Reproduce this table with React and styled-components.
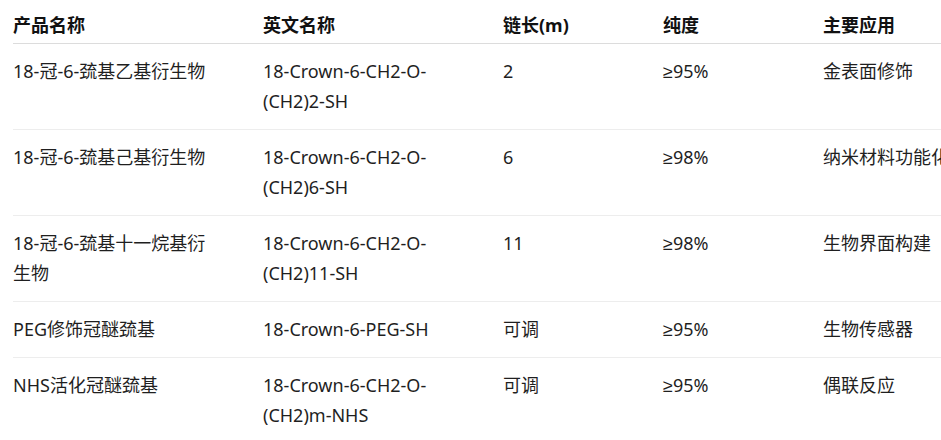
import React from 'react';
import styled, { createGlobalStyle } from 'styled-components';

const GlobalStyle = createGlobalStyle`
    body {
        margin: 0;
        background: #fff;
        overflow: hidden;
        font-family: "Noto Sans", "Liberation Sans", "Noto Sans CJK SC", sans-serif;
        color: #1f1f1f;
    }
`;

const Wrapper = styled.div`
    padding: 0 0 0 13px;
    width: 1040px;
`;

const Table = styled.table`
    border-collapse: collapse;
    table-layout: fixed;
    width: 1010px;
    font-size: 18px;
    line-height: 30px;
`;

const Col = styled.col`
    width: ${p => p.$w}px;
`;

const Th = styled.th`
    text-align: left;
    font-weight: 700;
    padding: 10px 48px 3px 0;
    border-bottom: 1px solid #dcdcdc;
    color: #111;
`;

const Td = styled.td`
    vertical-align: top;
    padding: 12px 48px 13px 0;
`;

const Row = styled.tr`
    border-bottom: 1px solid #ededed;

    &:last-child {
        border-bottom: none;
    }
`;

const products = [
    { cn: '18-冠-6-巯基乙基衍生物', en: '18-Crown-6-CH2-O-(CH2)2-SH', len: '2', pur: '≥95%', use: '金表面修饰' },
    { cn: '18-冠-6-巯基己基衍生物', en: '18-Crown-6-CH2-O-(CH2)6-SH', len: '6', pur: '≥98%', use: '纳米材料功能化' },
    { cn: '18-冠-6-巯基十一烷基衍生物', en: '18-Crown-6-CH2-O-(CH2)11-SH', len: '11', pur: '≥98%', use: '生物界面构建' },
    { cn: 'PEG修饰冠醚巯基', en: '18-Crown-6-PEG-SH', len: '可调', pur: '≥95%', use: '生物传感器' },
    { cn: 'NHS活化冠醚巯基', en: '18-Crown-6-CH2-O-(CH2)m-NHS', len: '可调', pur: '≥95%', use: '偶联反应' },
];

const App = () => {
    return (
        <>
            <GlobalStyle />
            <Wrapper>
                <Table>
                    <colgroup>
                        <Col $w={250} />
                        <Col $w={240} />
                        <Col $w={160} />
                        <Col $w={160} />
                        <Col $w={200} />
                    </colgroup>
                    <thead>
                        <tr>
                            <Th>产品名称</Th>
                            <Th>英文名称</Th>
                            <Th>链长(m)</Th>
                            <Th>纯度</Th>
                            <Th>主要应用</Th>
                        </tr>
                    </thead>
                    <tbody>
                        {products.map(p => (
                            <Row key={p.cn}>
                                <Td>{p.cn}</Td>
                                <Td>{p.en}</Td>
                                <Td>{p.len}</Td>
                                <Td>{p.pur}</Td>
                                <Td>{p.use}</Td>
                            </Row>
                        ))}
                    </tbody>
                </Table>
            </Wrapper>
        </>
    );
};

export default App;
